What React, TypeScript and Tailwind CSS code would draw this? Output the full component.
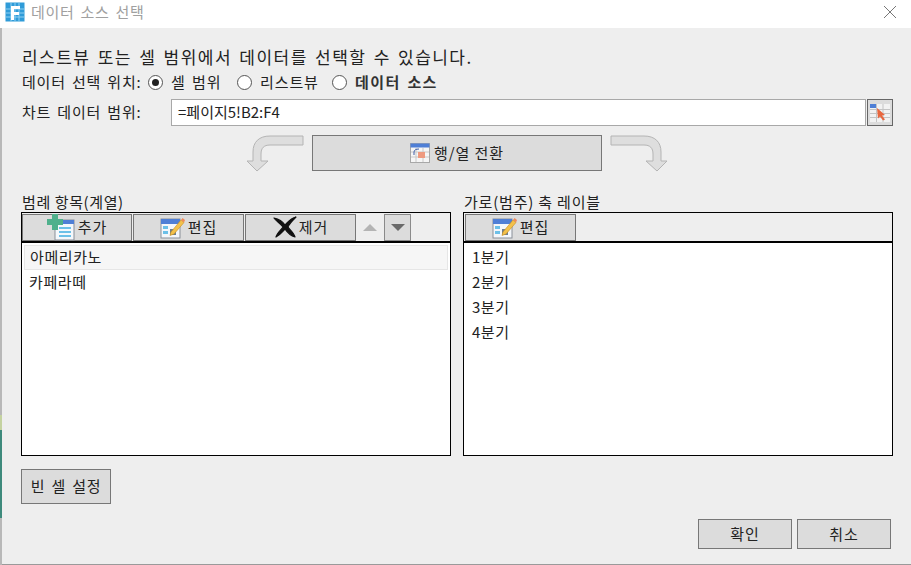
const font = "[font-family:'Noto_Sans_CJK_KR','Liberation_Sans',sans-serif]";
const btn = "flex items-center justify-center border border-[#777] bg-[#dcdcdc] text-[#222]";

function AppIcon() {
  return (
    <svg width="20" height="20" viewBox="0 0 20 20">
      <rect x="0.5" y="0.5" width="19" height="19" fill="#2f9bd8" />
      <path d="M1 7h18M1 11h18M1 15h18M6 1v18M10 1v18M14 1v18" stroke="#8fd0f2" strokeWidth="1" />
      <path d="M6 4h9v3H9v3h5v3H9v5H6z" fill="#fff" />
    </svg>
  );
}

function EditIcon() {
  return (
    <svg width="26" height="24" viewBox="0 0 26 24">
      <rect x="1" y="4" width="19" height="19" fill="#f4f7fb" stroke="#8a8f98" />
      <rect x="1" y="4" width="19" height="5" fill="#4f7fd6" />
      <rect x="3" y="11" width="5" height="3" fill="#6cc0e8" />
      <rect x="3" y="16" width="5" height="3" fill="#6cc0e8" />
      <rect x="10" y="14" width="6" height="6" fill="#6e7f8f" />
      <path d="M11 17 21 5l3 2.500L14 19l-4 1.500z" fill="#f3c14b" stroke="#c98f1e" strokeWidth="0.6" />
      <path d="M21 5l1.600-2 2.400 2-1 2.500z" fill="#ef8a5a" />
    </svg>
  );
}

function AddIcon() {
  return (
    <svg width="29" height="27" viewBox="0 0 29 27">
      <rect x="8" y="6" width="19" height="20" fill="#f4f8fc" stroke="#8a8f98" />
      <rect x="8" y="6" width="19" height="4" fill="#4f7fd6" />
      <path d="M12 14h12M12 18h12M12 22h12" stroke="#6cc0e8" strokeWidth="2" />
      <path d="M5 0h6v5h5v6h-5v5H5v-5H0V5h5z" fill="#4fb08c" />
    </svg>
  );
}

function RemoveIcon() {
  return (
    <svg width="24" height="22" viewBox="0 0 24 22">
      <path d="M1 2c5 1 9 4 11 7 3-3 6-7 11-8-3 3-7 7-8 10 2 3 6 6 7 10-4-1-8-5-10-8-3 3-5 6-9 8 1-4 5-7 7-10C7 7 3 5 1 2z" fill="#111" stroke="#111" strokeWidth="1.2" strokeLinejoin="round" />
    </svg>
  );
}

function SwapIcon() {
  return (
    <svg width="20" height="20" viewBox="0 0 20 20">
      <rect x="0.500" y="0.500" width="19" height="19" fill="#f6f6f6" stroke="#a8a8a8" />
      <rect x="0.500" y="0.500" width="19" height="4" fill="#4f7fd6" />
      <path d="M1 9h18M1 14h18M6 5v14M13 5v14" stroke="#c8c8c8" />
      <rect x="8" y="9" width="7" height="6" fill="#ee9a80" />
      <path d="M4 12V9c0-2 2-3 5-3" stroke="#3f5fa8" fill="none" />
    </svg>
  );
}

function RangeIcon() {
  return (
    <svg width="20" height="18" viewBox="0 0 20 18">
      <rect x="0" y="0" width="20" height="18" fill="#f2f2f2" />
      <rect x="0" y="0" width="7" height="4" fill="#4f7fd6" />
      <path d="M0 5.500h20M0 9.500h20M0 13.500h20M6.500 0v18M13 0v18" stroke="#c4c4c4" />
      <path d="M7 4l8 7-3 .5 3 4-2 1-3-4-2 2z" fill="#e8673f" />
    </svg>
  );
}

function CurveArrow({ flip }: { flip?: boolean }) {
  return (
    <svg width="58" height="37" viewBox="0 0 58 37" className={flip ? "-scale-x-100" : ""}>
      <path
        d="M57 1v9H24c-6 0-9 3-9 9v7h7L11 36 1 26h6v-9C7 7 13 1 24 1z"
        fill="#dedede"
        stroke="#b4b4b4"
      />
    </svg>
  );
}

function Radio({ on, label, bold, w }: { on?: boolean; label: string; bold?: boolean; w: string }) {
  return (
    <div className={`flex ${w} items-center gap-[8px]`}>
      <span className="flex h-[15px] w-[15px] shrink-0 items-center justify-center rounded-full border border-[#555] bg-white">
        {on && <span className="h-[7px] w-[7px] rounded-full bg-[#222]" />}
      </span>
      <span className={`whitespace-nowrap [word-spacing:2px] ${bold ? "font-bold tracking-[1.4px] text-[#333]" : "tracking-[0.9px]"}`}>{label}</span>
    </div>
  );
}

function ToolButton({ icon, label, w }: { icon: React.ReactNode; label: string; w: string }) {
  return (
    <div className={`flex h-[27px] ${w} items-center justify-center gap-[2px] border border-[#777] bg-[#dcdcdc] text-[15px] tracking-[1px]`}>
      <span className="flex h-[24px] items-center">{icon}</span>
      <span className="text-[#222]">{label}</span>
    </div>
  );
}

export default function App() {
  const series = ["아메리카노", "카페라떼"];
  const labels = ["1분기", "2분기", "3분기", "4분기"];

  return (
    <div className={`${font} flex h-[565px] w-[911px] overflow-hidden text-[15px] text-[#222]`}>
      <div className="flex w-[2px] shrink-0 flex-col">
        <div className="h-[28px] bg-white" />
        <div className="h-[387px] bg-[#b8b8b8]" />
        <div className="h-[15px] bg-[#c4d2a0]" />
        <div className="h-[88px] bg-[#3e8a7c]" />
        <div className="flex-1 bg-[#b8b8b8]" />
      </div>
      <div className="flex flex-1 flex-col border-b border-[#9a9a9a] bg-[#eeeeee]">
        <div className="flex h-[28px] shrink-0 items-center bg-white pb-[4px] pl-[3px] pr-[14px]">
          <AppIcon />
          <span className="ml-[6px] text-[15px] tracking-[0.7px] text-[#a0a0a0] [word-spacing:2px]">데이터 소스 선택</span>
          <svg width="14" height="14" viewBox="0 0 14 14" className="ml-auto">
            <path d="M1 1l12 12M13 1L1 13" stroke="#777" strokeWidth="1" />
          </svg>
        </div>

        <div className="flex flex-1 flex-col pl-[19px] pr-[18px]">
          <div className="ml-[1px] mt-[17px] h-[24px] whitespace-nowrap text-[17px] leading-[24px] tracking-[1.470px] [word-spacing:2px]">리스트뷰 또는 셀 범위에서 데이터를 선택할 수 있습니다.</div>
          <div className="ml-[1px] mt-[2px] flex h-[22px] items-center">
            <span className="w-[126px] whitespace-nowrap tracking-[0.8px] [word-spacing:2px]">데이터 선택 위치:</span>
            <div className="flex items-center">
              <Radio w="w-[89px]" on label="셀 범위" />
              <Radio w="w-[95px]" label="리스트뷰" />
              <Radio w="w-[110px]" label="데이터 소스" bold />
            </div>
          </div>
          <div className="mt-[6px] flex h-[27px] items-center">
            <span className="ml-[1px] w-[149px] whitespace-nowrap tracking-[0.8px] [word-spacing:2px]">차트 데이터 범위:</span>
            <div className="flex h-[27px] flex-1 items-center border border-[#a8a8a8] bg-white pl-[6px] text-[15px]">=페이지5!B2:F4</div>
            <div className="ml-[1px] flex h-[27px] w-[26px] items-center justify-center border border-[#666] bg-[#dcdcdc]">
              <RangeIcon />
            </div>
          </div>

          <div className="mt-[9px] flex h-[36px] items-start justify-center gap-[8px]">
            <CurveArrow />
            <div className={`${btn} h-[36px] w-[290px] gap-[4px] text-[15px]`}>
              <SwapIcon />
              <span className="tracking-[0.9px]">행/열 전환</span>
            </div>
            <CurveArrow flip />
          </div>

          <div className="mt-[21px] flex gap-[12px]">
            <div className="flex w-[430px] flex-col">
              <div className="ml-[1px] h-[20px] whitespace-nowrap leading-[20px] tracking-[0.6px]">범례 항목(계열)</div>
              <div className="flex h-[31px] items-center gap-[1px] border border-b-2 border-black bg-[#eeeeee]">
                <ToolButton w="w-[110px]" icon={<AddIcon />} label="추가" />
                <ToolButton w="w-[111px]" icon={<EditIcon />} label="편집" />
                <ToolButton w="w-[111px]" icon={<RemoveIcon />} label="제거" />
                <div className="flex h-[27px] w-[26px] items-center justify-center bg-[#eeeeee]">
                  <span className="h-0 w-0 border-x-[7px] border-b-[7px] border-x-transparent border-b-[#b4b4b4]" />
                </div>
                <div className="flex h-[27px] w-[27px] items-center justify-center border border-[#8a8a8a] bg-[#dcdcdc]">
                  <span className="h-0 w-0 border-x-[7px] border-t-[7px] border-x-transparent border-t-[#6a6a6a]" />
                </div>
              </div>
              <div className="h-[213px] border border-t-0 border-black bg-white px-[2px] pt-[2px]">
                {series.map((s, i) => (
                  <div key={s} className={`flex h-[25px] items-center pl-[5px] tracking-[0.6px] ${i === 0 ? "border border-[#e6e6e6] bg-[#f6f6f6]" : ""}`}>
                    {s}
                  </div>
                ))}
              </div>
            </div>

            <div className="flex w-[430px] flex-col">
              <div className="ml-[1px] h-[20px] whitespace-nowrap leading-[20px] tracking-[0.8px]">가로(범주) 축 레이블</div>
              <div className="flex h-[31px] items-center border border-b-2 border-black bg-[#eeeeee] pl-[1px]">
                <ToolButton w="w-[111px]" icon={<EditIcon />} label="편집" />
              </div>
              <div className="h-[213px] border border-t-0 border-black bg-white px-[2px] pt-[2px]">
                {labels.map((l) => (
                  <div key={l} className="flex h-[25px] items-center pl-[6px] tracking-[0.5px]">{l}</div>
                ))}
              </div>
            </div>
          </div>

          <div className={`${btn} mt-[13px] h-[35px] w-[90px] tracking-[0.8px] [word-spacing:2px]`}>빈 셀 설정</div>

          <div className="mt-[15px] flex justify-end gap-[5px] pr-[2px]">
            <div className={`${btn} h-[30px] w-[94px] tracking-[1px]`}>확인</div>
            <div className={`${btn} h-[30px] w-[94px] tracking-[1px]`}>취소</div>
          </div>
        </div>
      </div>
    </div>
  );
}
